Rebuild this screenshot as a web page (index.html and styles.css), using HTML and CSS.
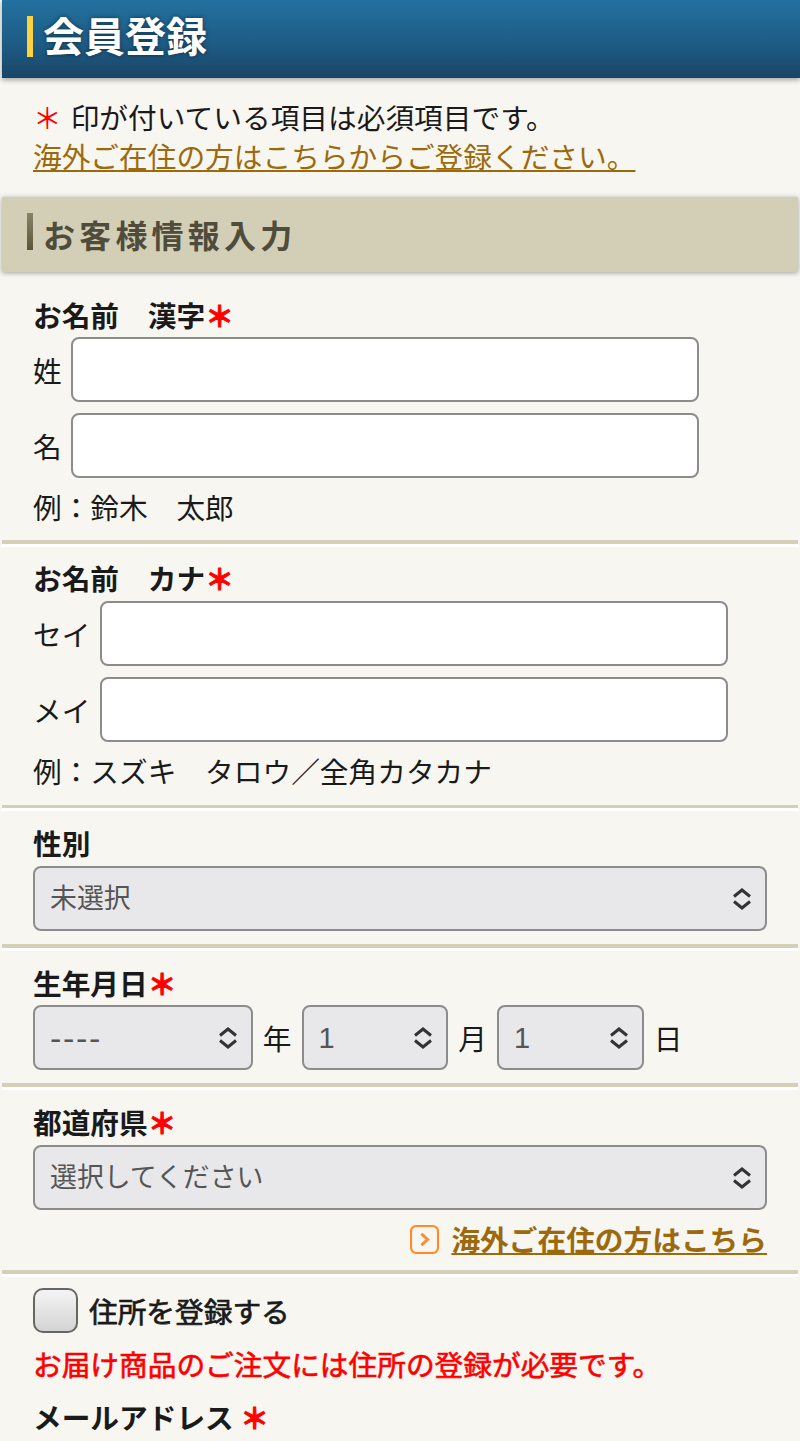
FILE: index.html
```html
<!DOCTYPE html>
<html lang="ja">
<head>
    <meta charset="UTF-8">
    <meta name="viewport" content="width=device-width, initial-scale=1.0">
    <title>会員登録</title>
    <link rel="stylesheet" href="styles.css">
</head>
<body>
    <h1 class="page-title"><span>会員登録</span></h1>

    <div class="intro">
        <p><span class="req-mark">＊</span>印が付いている項目は必須項目です。</p>
        <p class="intro-link"><a href="#">海外ご在住の方はこちらからご登録ください。</a></p>
    </div>

    <h2 class="section-title"><span>お客様情報入力</span></h2>

    <form>
        <div class="field first">
            <div class="field-label">お名前　漢字<span class="req">＊</span></div>
            <div class="name-row"><label>姓</label><input type="text" class="input-kanji"></div>
            <div class="name-row"><label>名</label><input type="text" class="input-kanji"></div>
            <p class="example">例：鈴木　太郎</p>
        </div>

        <div class="field kana">
            <div class="field-label">お名前　カナ<span class="req">＊</span></div>
            <div class="name-row"><label>セイ</label><input type="text" class="input-kana"></div>
            <div class="name-row"><label>メイ</label><input type="text" class="input-kana"></div>
            <p class="example">例：スズキ　タロウ／全角カタカナ</p>
        </div>

        <div class="field">
            <div class="field-label tight">性別</div>
            <div class="select-wrap">
                <select><option>未選択</option></select>
                <svg class="updown" viewBox="0 0 20 22"><path d="M2 8.5 10 2l8 6.5M2 13.5 10 20l8-6.5"/></svg>
            </div>
        </div>

        <div class="field">
            <div class="field-label">生年月日<span class="req">＊</span></div>
            <div class="birth-row">
                <div class="select-wrap year">
                    <select><option>----</option></select>
                    <svg class="updown" viewBox="0 0 20 22"><path d="M2 8.5 10 2l8 6.5M2 13.5 10 20l8-6.5"/></svg>
                </div>
                <span>年</span>
                <div class="select-wrap day">
                    <select><option>1</option></select>
                    <svg class="updown" viewBox="0 0 20 22"><path d="M2 8.5 10 2l8 6.5M2 13.5 10 20l8-6.5"/></svg>
                </div>
                <span>月</span>
                <div class="select-wrap day">
                    <select><option>1</option></select>
                    <svg class="updown" viewBox="0 0 20 22"><path d="M2 8.5 10 2l8 6.5M2 13.5 10 20l8-6.5"/></svg>
                </div>
                <span>日</span>
            </div>
        </div>

        <div class="field">
            <div class="field-label tight">都道府県<span class="req">＊</span></div>
            <div class="select-wrap">
                <select><option>選択してください</option></select>
                <svg class="updown" viewBox="0 0 20 22"><path d="M2 8.5 10 2l8 6.5M2 13.5 10 20l8-6.5"/></svg>
            </div>
            <div class="overseas">
                <svg class="arrow-box" viewBox="0 0 28 28"><rect x="1" y="1" width="26" height="26" rx="5"/><path d="M11 8.5 17 14l-6 5.5"/></svg>
                <a href="#">海外ご在住の方はこちら</a>
            </div>
        </div>

        <div class="field last">
            <label class="check-row"><span class="checkbox"></span>住所を登録する</label>
            <p class="notice">お届け商品のご注文には住所の登録が必要です。</p>
            <div class="field-label mail">メールアドレス <span class="req">＊</span></div>
        </div>
    </form>
</body>
</html>
```

FILE: styles.css
```css
* {
    margin: 0;
    padding: 0;
    box-sizing: border-box;
}

body {
    font-family: "Noto Sans CJK JP", "Noto Sans", sans-serif;
    font-size: 28.7px;
    line-height: 40px;
    color: #1a1a1a;
    background: #f7f6f1;
    height: 1441px;
    overflow: hidden;
}

a {
    color: #9c6a0c;
}

.page-title {
    height: 78px;
    margin-left: 2px;
    padding: 16px 0 0 25px;
    background: linear-gradient(#23719f 0%, #1d5a83 60%, #1a4566 100%);
    box-shadow: 0 2px 5px rgba(0, 0, 0, 0.35);
    font-size: 41px;
    font-weight: 700;
    line-height: 37px;
    color: #fff;
    text-shadow: 0 0 4px rgba(0, 0, 0, 0.5);
}

.page-title span {
    display: block;
    padding: 0 0 4px 10px;
    border-left: 6px solid #fed23f;
}

.intro {
    padding: 19px 33px 0;
}

.intro-link {
    margin-top: -1px;
}

.req-mark {
    color: #ff0000;
    margin-right: 9px;
}

.section-title {
    height: 75px;
    margin: 21px 2px 0;
    padding: 16px 0 0 25px;
    background: #d3ceb6;
    box-shadow: 0 1px 5px rgba(0, 0, 0, 0.35);
    font-size: 32px;
    font-weight: 700;
    line-height: 32px;
    letter-spacing: 4.2px;
    color: #504c3c;
}

.section-title span {
    display: block;
    padding: 5px 0 0 10px;
    border-left: 6px solid #6a6446;
    border-image: linear-gradient(#8a8468, #5a5438) 1;
}

.field {
    margin: 0 2px;
    padding: 15px 31px 13px;
    border-bottom: 4px solid #d6cfb8;
    box-shadow: 0 3px 0 #fff;
}

.field.first {
    padding-top: 23px;
}

.field.kana {
    padding: 14px 31px 14px;
    border-bottom-width: 3px;
}

.field.kana .field-label {
    margin-bottom: 3px;
}

.field.kana .name-row {
    gap: 10px;
}

.field.last {
    border-bottom: none;
    box-shadow: none;
    padding-top: 14px;
}

.field-label {
    font-weight: 700;
    margin-bottom: 2px;
}

.field-label.tight {
    margin-bottom: 3px;
}

.req {
    color: #ff0000;
    -webkit-text-stroke: 1px #ff0000;
}

.name-row {
    display: flex;
    align-items: center;
    gap: 9px;
    margin-bottom: 11px;
}

.name-row label {
    white-space: nowrap;
}

input[type="text"] {
    height: 65px;
    background: #fff;
    border: 2px solid #8c8c8c;
    border-radius: 8px;
}

.input-kanji {
    width: 628px;
}

.input-kana {
    width: 628px;
}

.example {
    margin-top: -2px;
}

.select-wrap {
    position: relative;
    height: 65px;
}

select {
    appearance: none;
    width: 100%;
    height: 65px;
    padding-left: 15px;
    background: #e8e8eb;
    border: 2px solid #8c8c8c;
    border-radius: 8px;
    font-family: "Liberation Sans", "Noto Sans CJK JP", sans-serif;
    font-size: 26.9px;
    color: #555;
}

.updown {
    position: absolute;
    top: 22px;
    right: 15px;
    width: 20px;
    height: 22px;
    fill: none;
    stroke: #333;
    stroke-width: 3;
}

.birth-row {
    display: flex;
    align-items: center;
}

.birth-row span {
    width: 49px;
    text-align: center;
}

.select-wrap.year {
    width: 219.5px;
}

.select-wrap.year select {
    font-size: 34px;
    letter-spacing: 1.7px;
}

.select-wrap.day {
    width: 146.5px;
}

.select-wrap.day select {
    font-size: 29px;
}

.overseas {
    display: flex;
    justify-content: flex-end;
    align-items: center;
    gap: 12px;
    margin-top: 9px;
    margin-bottom: -2px;
    font-weight: 700;
}

.arrow-box {
    width: 29px;
    height: 29px;
    fill: none;
    stroke: #ff8a2a;
    stroke-width: 2;
}

.arrow-box path {
    stroke-width: 2.8;
}

.check-row {
    display: flex;
    align-items: center;
    gap: 11px;
    -webkit-text-stroke: 0.7px #1a1a1a;
}

.checkbox {
    width: 45px;
    height: 45px;
    background: linear-gradient(#f4f4f4, #d4d4d4);
    border: 2px solid #666;
    border-radius: 10px;
}

.notice {
    margin-top: 11px;
    color: #ff0000;
    -webkit-text-stroke: 0.6px #ff0000;
}

.field-label.mail {
    margin-top: 13px;
}
```
